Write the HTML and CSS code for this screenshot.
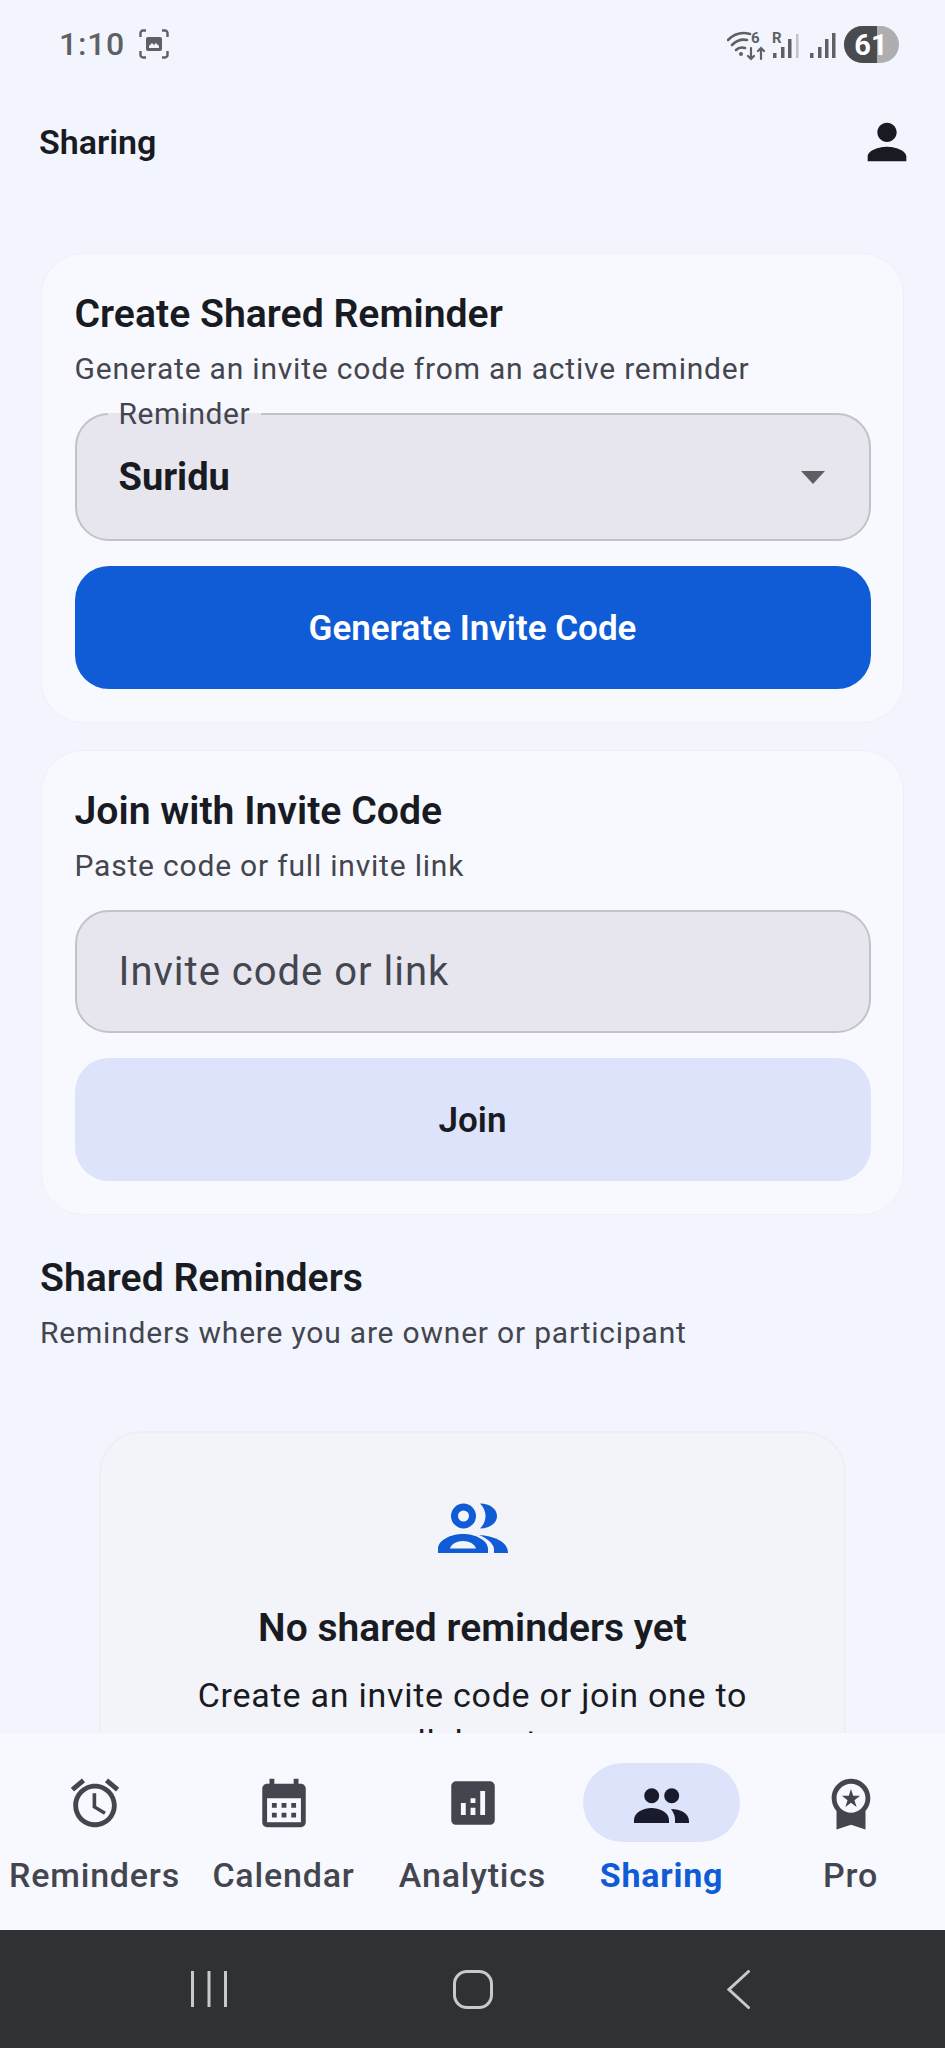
FILE: index.html
```html
<!DOCTYPE html>
<html lang="en">
<head>
    <meta charset="UTF-8">
    <meta name="viewport" content="width=device-width, initial-scale=1.0">
    <title>Sharing</title>
    <link rel="stylesheet" href="styles.css">
</head>
<body>
    <div class="app">
        <div class="status-bar">
            <div class="status-left">
                <span class="clock">1:10</span>
                <svg class="shot-icon" viewBox="0 0 30 30" fill="none" stroke="#5f6064" stroke-width="2.4">
                    <path d="M7 1.5H4a2.5 2.5 0 0 0-2.500 2.500V8M23 1.500h3A2.500 2.500 0 0 1 28.500 4V8M1.500 22v4A2.500 2.500 0 0 0 4 28.500h3M28.500 22v4a2.500 2.500 0 0 1-2.500 2.500h-3"/>
                    <rect x="7" y="8" width="16" height="14" rx="2" fill="#5f6064" stroke="none"/>
                    <path d="M10 17l3-3 2 2 2-2 3 3v2H10z" fill="#f3f5fe" stroke="none"/>
                </svg>
            </div>
            <svg class="status-right" viewBox="0 0 172 37">
                <g fill="none" stroke="#5f6064" stroke-width="2.600" stroke-linecap="round">
                    <path d="M1 14C8 7 16 6 23 8"/>
                    <path d="M5 19C10 14 15 13 20 14"/>
                    <path d="M9 24c3-3 6-3 9-2"/>
                </g>
                <g fill="none" stroke="#5f6064" stroke-width="2.200" stroke-linecap="round">
                    <path d="M24 22v11M21 30l3 3 3-3"/>
                    <path d="M34 33V22M31 25l3-3 3 3"/>
                </g>
                <circle cx="14" cy="28" r="2" fill="#5f6064"/>
                <text x="24" y="17" class="tiny">6</text>
                <text x="45" y="17" class="tiny">R</text>
                <g fill="#5f6064">
                    <rect x="46" y="27" width="3.500" height="5"/>
                    <rect x="54" y="21" width="3.500" height="11"/>
                    <rect x="61" y="13" width="3.500" height="19"/>
                    <rect x="69" y="8" width="2.500" height="24" fill="#c3c4c8"/>
                    <rect x="83" y="27" width="3.500" height="5"/>
                    <rect x="91" y="21" width="3.500" height="11"/>
                    <rect x="98" y="13" width="3.500" height="19"/>
                    <rect x="105" y="7" width="3.500" height="25"/>
                </g>
                <rect x="117" y="0" width="55" height="37" rx="18.500" fill="#aeaeb0"/>
                <path d="M135.500 0H150V37H135.500a18.500 18.500 0 0 1 0-37z" fill="#4a4b4f"/>
                <text x="144" y="29" class="batt" text-anchor="middle">61</text>
            </svg>
        </div>

        <header class="top-bar">
            <h1>Sharing</h1>
            <svg class="profile" viewBox="0 0 24 24"><path d="M12 12c2.210 0 4-1.790 4-4s-1.790-4-4-4-4 1.790-4 4 1.790 4 4 4zm0 2c-2.670 0-8 1.340-8 4v2h16v-2c0-2.660-5.330-4-8-4z"/></svg>
        </header>

        <main class="content">
            <section class="card">
                <h2>Create Shared Reminder</h2>
                <p class="hint">Generate an invite code from an active reminder</p>
                <fieldset class="picker">
                    <legend>Reminder</legend>
                    <div class="picker-row">
                        <span class="picker-value">Suridu</span>
                        <span class="caret"></span>
                    </div>
                </fieldset>
                <button class="btn btn-primary" type="button">Generate Invite Code</button>
            </section>

            <section class="card">
                <h2>Join with Invite Code</h2>
                <p class="hint">Paste code or full invite link</p>
                <input class="code-input" type="text" placeholder="Invite code or link">
                <button class="btn btn-soft" type="button">Join</button>
            </section>

            <div class="section-head">
                <h2>Shared Reminders</h2>
                <p class="hint">Reminders where you are owner or participant</p>
            </div>

            <section class="empty">
                <svg class="empty-icon" viewBox="0 0 70 50">
                    <path fill-rule="evenodd" d="M25.500 .500a12.500 12.500 0 1 1 0 25 12.500 12.500 0 0 1 0-25zm0 7a5.500 5.500 0 1 0 0 11 5.500 5.500 0 0 0 0-11zM0 50v-4C0 37 13 31 25 31s25 6 25 15v4zm12-4.500h26C37 41 31 38 25 38s-12 3-13 7.500z"/>
                    <path d="M42 .500C52 .500 59 6 59 13s-7 12.500-17 12.500c3.500-3.500 5.500-7.500 5.500-12.500S45.500 4 42 .500zM41 32c14 1 29 6 29 18H56v-4c0-5-7-11-15-14z"/>
                </svg>
                <h3>No shared reminders yet</h3>
                <p>Create an invite code or join one to collaborate.</p>
            </section>
        </main>

        <nav class="tabs">
            <a class="tab">
                <span class="tab-icon"><svg viewBox="0 0 24 24"><path d="M22 5.720l-4.600-3.860-1.290 1.530 4.600 3.860L22 5.720zM7.880 3.390L6.600 1.860 2 5.710l1.290 1.530 4.590-3.850zM12.500 8H11v6l4.750 2.850.75-1.230-4-2.370V8zM12 4c-4.970 0-9 4.030-9 9s4.030 9 9 9 9-4.030 9-9-4.030-9-9-9zm0 16c-3.870 0-7-3.130-7-7s3.130-7 7-7 7 3.130 7 7-3.130 7-7 7z"/></svg></span>
                Reminders
            </a>
            <a class="tab">
                <span class="tab-icon"><svg viewBox="0 0 24 24"><path d="M19 4h-1V2h-2v2H8V2H6v2H5c-1.110 0-1.990.900-1.990 2L3 20c0 1.100.890 2 2 2h14c1.100 0 2-.900 2-2V6c0-1.100-.900-2-2-2zm0 16H5V10h14v10zM9 14H7v-2h2v2zm4 0h-2v-2h2v2zm4 0h-2v-2h2v2zm-8 4H7v-2h2v2zm4 0h-2v-2h2v2zm4 0h-2v-2h2v2z"/></svg></span>
                Calendar
            </a>
            <a class="tab">
                <span class="tab-icon"><svg viewBox="0 0 24 24"><path d="M19 3H5c-1.100 0-2 .900-2 2v14c0 1.100.900 2 2 2h14c1.100 0 2-.900 2-2V5c0-1.100-.900-2-2-2zM9 17H7v-5h2v5zm4 0h-2v-3h2v3zm0-5h-2v-2h2v2zm4 5h-2V7h2v10z"/></svg></span>
                Analytics
            </a>
            <a class="tab active">
                <span class="tab-icon"><svg viewBox="0 0 60 60"><circle cx="19.700" cy="22.700" r="7.500"/><circle cx="39.700" cy="22.700" r="7.500"/><path d="M2 50v-3c0-8 10-12 17.500-12S37 39 37 47v3z"/><path d="M39 36c9 0 18 4 18 12v2H43v-4c0-4-2-7-4-10z"/></svg></span>
                Sharing
            </a>
            <a class="tab">
                <span class="tab-icon"><svg viewBox="0 0 24 24"><path d="M9.680 13.690 12 11.930l2.310 1.760-.880-2.850L15.750 9h-2.840L12 6.190 11.090 9H8.250l2.310 1.840-.880 2.850zM20 10c0-4.420-3.580-8-8-8s-8 3.580-8 8c0 2.030.760 3.870 2 5.280V23l6-2 6 2v-7.720c1.240-1.410 2-3.250 2-5.280zm-8-6c3.310 0 6 2.690 6 6s-2.690 6-6 6-6-2.690-6-6 2.690-6 6-6z"/></svg></span>
                Pro
            </a>
        </nav>

        <div class="system-nav">
            <svg class="sys-recent" viewBox="0 0 36 36" fill="none" stroke="#c9c9cb" stroke-width="3"><path d="M1.500 0v36M18 0v36M34.500 0v36"/></svg>
            <span class="sys-home"></span>
            <svg class="sys-back" viewBox="0 0 23 39" fill="none" stroke="#c9c9cb" stroke-width="3" stroke-linecap="round"><path d="M21.500 1.500L2 19.500l19.500 18"/></svg>
        </div>
    </div>
</body>
</html>
```

FILE: styles.css
```css
* {
    box-sizing: border-box;
}

body {
    margin: 0;
    background-color: #f3f5fe;
    font-family: Roboto, 'Noto Sans', sans-serif;
    color: #191b22;
}

.app {
    display: flex;
    flex-direction: column;
    width: 945px;
    height: 2048px;
    overflow: hidden;
}

/* status bar */
.status-bar {
    flex: 0 0 88px;
    display: flex;
    justify-content: space-between;
    align-items: center;
    padding: 0 46px 0 59px;
}

.status-left {
    display: flex;
    align-items: center;
    gap: 14px;
}

.clock {
    font-size: 32px;
    font-weight: 500;
    letter-spacing: 0.75px;
    color: #5f6064;
}

.shot-icon {
    width: 30px;
    height: 30px;
}

.status-right {
    width: 172px;
    height: 37px;
}

.tiny {
    font-size: 15px;
    font-weight: 700;
    fill: #5f6064;
}

.batt {
    font-size: 29px;
    font-weight: 700;
    fill: #fff;
}

/* header */
.top-bar {
    flex: 0 0 108px;
    display: flex;
    justify-content: space-between;
    align-items: center;
    padding: 0 29px 0 39px;
}

.top-bar h1 {
    margin: 0;
    font-size: 34px;
    font-weight: 600;
}

.profile {
    width: 58px;
    height: 58px;
    fill: #191b22;
}

/* scroll area */
.content {
    flex: 1;
    min-height: 0;
    overflow: hidden;
    display: flex;
    flex-direction: column;
    padding: 57px 40px 0;
}

.card {
    flex: none;
    margin: 0 1px 27px;
    padding: 38px 32.5px 33px;
    background-color: #f8f9fe;
    border: 1px solid #f0f1f6;
    border-radius: 42px;
}

h2 {
    margin: 0;
    font-size: 39.2px;
    line-height: 44px;
    font-weight: 600;
}

.hint {
    margin: 15px 0 0;
    font-size: 30px;
    line-height: 36px;
    letter-spacing: 0.8px;
    color: #44464f;
}

.picker {
    margin: 11px 0 0;
    padding: 0 44px 0 42px;
    height: 143px;
    background-color: #e7e6ef;
    border: 2.5px solid #c2c2ca;
    border-radius: 34px;
}

.picker legend {
    margin-left: -11px;
    padding: 0 11px;
    font-size: 30px;
    line-height: 32px;
    letter-spacing: 0.5px;
    color: #44464f;
}

.picker-row {
    display: flex;
    justify-content: space-between;
    align-items: center;
    height: 94px;
}

.picker-value {
    font-size: 38px;
    font-weight: 700;
}

.caret {
    width: 0;
    height: 0;
    border-left: 12px solid transparent;
    border-right: 12px solid transparent;
    border-top: 13px solid #5f5f63;
}

.btn {
    display: block;
    width: 100%;
    height: 123px;
    margin-top: 25px;
    padding: 2px 0 0;
    border: none;
    border-radius: 34px;
    font-family: inherit;
    font-size: 35px;
    font-weight: 600;
}

.btn-primary {
    background-color: #0f5cd6;
    color: #fff;
}

.btn-soft {
    background-color: #dde3fa;
    color: #191b22;
}

.code-input {
    display: block;
    width: 100%;
    height: 123px;
    margin-top: 26px;
    padding: 0 42px;
    background-color: #e7e6ef;
    border: 2.5px solid #c2c2ca;
    border-radius: 34px;
    font-family: inherit;
    font-size: 40px;
    letter-spacing: 1px;
    outline: none;
}

.code-input::placeholder {
    color: #44464f;
    opacity: 1;
}

.section-head {
    flex: none;
    margin-top: 14px;
}

.section-head .hint {
    margin-top: 15px;
}

.empty {
    flex: none;
    display: flex;
    flex-direction: column;
    align-items: center;
    margin: 80px 59px 0;
    padding: 70px 30px 40px;
    background-color: #f3f3fa;
    border: 2px solid #eeeff5;
    border-radius: 42px;
    text-align: center;
}

.empty-icon {
    width: 70px;
    height: 50px;
    fill: #0f5cd6;
}

.empty h3 {
    margin: 52px 0 0;
    font-size: 39px;
    line-height: 46px;
    font-weight: 600;
}

.empty p {
    margin: 21px 0 0;
    font-size: 34px;
    line-height: 47px;
    letter-spacing: 0.75px;
}

/* bottom tabs */
.tabs {
    flex: 0 0 197px;
    display: grid;
    grid-template-columns: repeat(5, 1fr);
    padding-top: 30px;
    background-color: #f7f9ff;
}

.tab {
    display: flex;
    flex-direction: column;
    align-items: center;
    font-size: 34px;
    font-weight: 500;
    line-height: 40px;
    letter-spacing: 0.8px;
    color: #44464f;
    white-space: nowrap;
}

.tab-icon {
    display: flex;
    justify-content: center;
    align-items: center;
    width: 157px;
    height: 79px;
    margin-bottom: 13px;
    border-radius: 40px;
}

.tab-icon svg {
    width: 58px;
    height: 58px;
    fill: #44464f;
}

.tab.active {
    color: #0f5cd6;
    font-weight: 700;
}

.tab.active .tab-icon {
    background-color: #dde3fa;
}

.tab.active .tab-icon svg {
    width: 60px;
    height: 60px;
    fill: #191b2c;
}

/* android buttons */
.system-nav {
    flex: 0 0 118px;
    display: flex;
    align-items: center;
    padding-left: 191px;
    background-color: #303134;
}

.sys-recent {
    width: 36px;
    height: 36px;
}

.sys-home {
    width: 40px;
    height: 39px;
    margin-left: 226px;
    border: 3px solid #c9c9cb;
    border-radius: 14px;
}

.sys-back {
    width: 23px;
    height: 39px;
    margin-left: 234px;
}
```
